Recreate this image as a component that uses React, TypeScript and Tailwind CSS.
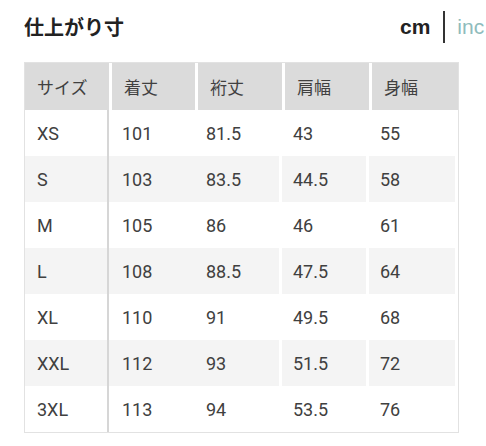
import React from "react";

// size chart rows
const rows: string[][] = [
  ["XS", "101", "81.5", "43", "55"],
  ["S", "103", "83.5", "44.5", "58"],
  ["M", "105", "86", "46", "61"],
  ["L", "108", "88.5", "47.5", "64"],
  ["XL", "110", "91", "49.5", "68"],
  ["XXL", "112", "93", "51.5", "72"],
  ["3XL", "113", "94", "53.5", "76"],
];

const headers = ["サイズ", "着丈", "裄丈", "肩幅", "身幅"];

const App: React.FC = () => {
  return (
    <div className="w-[486px] h-[446px] overflow-hidden bg-white text-[#404040]">
      {/* Title + unit switch */}
      <div className="flex items-center h-[48px] pl-[24px] pt-[6px]">
        <div className="w-[376px] shrink-0 text-[20px] font-bold text-[#222] font-['Noto_Sans_CJK_JP',sans-serif]">
          仕上がり寸
        </div>
        <div className="flex items-center shrink-0 whitespace-nowrap">
          <span className="text-[21px] font-bold text-[#222] font-['Liberation_Sans',sans-serif]">cm</span>
          <div className="w-[2px] h-[32px] bg-[#333] ml-[13px] mr-[12px]" />
          <span className="text-[21px] text-[#8fbcbc] font-['Liberation_Sans',sans-serif]">inc</span>
        </div>
      </div>

      {/* Table */}
      <div className="ml-[24px] mt-[14px] w-[435px] border border-[#e2e2e2] font-['Roboto','Noto_Sans_CJK_JP',sans-serif]">
        <div className="flex h-[47px] gap-[3px] bg-white">
          {headers.map((h, i) => (
            <div
              key={h}
              className={`${i === 1 ? "w-[83px]" : i === 4 ? "w-[86px]" : "w-[84px]"} bg-[#dbdbdb] flex items-center pl-[12px] text-[17px] font-['Noto_Sans_CJK_JP',sans-serif]`}
            >
              {h}
            </div>
          ))}
        </div>
        {rows.map((r, ri) => {
          const bg = ri % 2 === 1 ? "bg-[#f4f4f4]" : "bg-white";
          return (
            <div key={r[0]} className="flex h-[46px] bg-white">
              <div className={`w-[84px] ${bg} flex items-center pl-[12px] text-[18px] border-r-2 border-[#d6d6d6]`}>
                {r[0]}
              </div>
              <div className={`w-[86px] ${bg} flex items-center pl-[13px] text-[18px]`}>{r[1]}</div>
              <div className="flex gap-[3px]">
                <div className={`w-[84px] ${bg} flex items-center pl-[11px] text-[18px]`}>{r[2]}</div>
                <div className={`w-[84px] ${bg} flex items-center pl-[11px] text-[18px]`}>{r[3]}</div>
                <div className={`w-[86px] ${bg} flex items-center pl-[11px] text-[18px]`}>{r[4]}</div>
              </div>
            </div>
          );
        })}
      </div>
    </div>
  );
};

export default App;
